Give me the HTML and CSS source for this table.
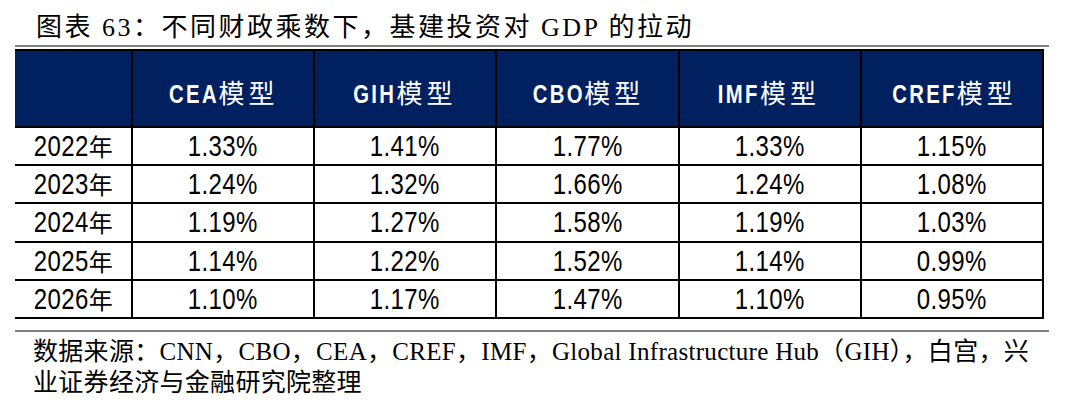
FILE: index.html
```html
<!DOCTYPE html>
<html lang="zh-CN">
<head>
<meta charset="utf-8">
<title>图表 63</title>
<link rel="stylesheet" href="styles.css">
</head>
<body>
<div class="figure">
  <div class="title">图表 63：不同财政乘数下，基建投资对 GDP 的拉动</div>
  <table class="data">
    <colgroup>
      <col class="c-year">
      <col class="c-val"><col class="c-val"><col class="c-val"><col class="c-val"><col class="c-val">
    </colgroup>
    <thead>
      <tr>
        <th></th>
        <th><span class="code">CEA</span><span class="cn">模型</span></th>
        <th><span class="code">GIH</span><span class="cn">模型</span></th>
        <th><span class="code">CBO</span><span class="cn">模型</span></th>
        <th><span class="code">IMF</span><span class="cn">模型</span></th>
        <th><span class="code">CREF</span><span class="cn">模型</span></th>
      </tr>
    </thead>
    <tbody>
      <tr><td><span class="yr">2022</span>年</td><td><span class="num">1.33%</span></td><td><span class="num">1.41%</span></td><td><span class="num">1.77%</span></td><td><span class="num">1.33%</span></td><td><span class="num">1.15%</span></td></tr>
      <tr><td><span class="yr">2023</span>年</td><td><span class="num">1.24%</span></td><td><span class="num">1.32%</span></td><td><span class="num">1.66%</span></td><td><span class="num">1.24%</span></td><td><span class="num">1.08%</span></td></tr>
      <tr><td><span class="yr">2024</span>年</td><td><span class="num">1.19%</span></td><td><span class="num">1.27%</span></td><td><span class="num">1.58%</span></td><td><span class="num">1.19%</span></td><td><span class="num">1.03%</span></td></tr>
      <tr><td><span class="yr">2025</span>年</td><td><span class="num">1.14%</span></td><td><span class="num">1.22%</span></td><td><span class="num">1.52%</span></td><td><span class="num">1.14%</span></td><td><span class="num">0.99%</span></td></tr>
      <tr><td><span class="yr">2026</span>年</td><td><span class="num">1.10%</span></td><td><span class="num">1.17%</span></td><td><span class="num">1.47%</span></td><td><span class="num">1.10%</span></td><td><span class="num">0.95%</span></td></tr>
    </tbody>
  </table>
  <div class="source">数据来源：CNN，CBO，CEA，CREF，IMF，Global Infrastructure Hub（GIH），白宫，兴<br>业证券经济与金融研究院整理</div>
</div>
</body>
</html>
```
FILE: styles.css
```css
html, body {
  margin: 0;
  padding: 0;
  background: #ffffff;
}

.figure {
  width: 1080px;
  height: 412px;
  padding: 0 31px 0 15px;
  box-sizing: border-box;
  display: flex;
  flex-direction: column;
}

.title {
  font-family: "Liberation Serif", "Noto Sans CJK SC", serif;
  font-size: 26px;
  letter-spacing: 2.5px;
  line-height: 30px;
  color: #000;
  padding: 13px 0 2px 21px;
  border-bottom: 2px solid #808080;
  white-space: nowrap;
}

.data {
  margin-top: 2px;
  width: 1028px;
  border-collapse: collapse;
  table-layout: fixed;
  font-family: "Liberation Sans", "Noto Sans CJK SC", sans-serif;
  color: #000;
}

.c-year { width: 117px; }
.c-val { width: 182.2px; }

.data th {
  background: #002060;
  color: #ffffff;
  height: 77px;
  padding: 6px 0 0 0;
  box-sizing: border-box;
  text-align: center;
  vertical-align: middle;
  border: 2px solid #000;
  white-space: nowrap;
}

.data th:first-child {
  border-left: none;
}

.data th .code {
  display: inline-block;
  font-family: "Liberation Sans", sans-serif;
  font-size: 26px;
  font-weight: 700;
  letter-spacing: 3px;
  transform: scaleX(0.78);
  transform-origin: right center;
  margin-left: -0.5em;
}

.data th .cn {
  font-family: "Noto Sans CJK SC", sans-serif;
  font-weight: 400;
  font-size: 26px;
  letter-spacing: 4px;
}

.data td {
  height: 38.2px;
  padding: 0;
  box-sizing: border-box;
  font-family: "Noto Sans CJK SC", sans-serif;
  font-size: 24px;
  line-height: 34px;
  text-align: center;
  vertical-align: middle;
  border: 2px solid #000;
  white-space: nowrap;
}

.data td:first-child {
  border-left: none;
}

.data .num,
.data .yr {
  display: inline-block;
  font-family: "Liberation Sans", sans-serif;
  font-size: 30px;
  letter-spacing: 0.5px;
  transform: scaleX(0.8);
}

.data .yr {
  transform-origin: right center;
  margin-left: -0.45em;
}

.source {
  margin-top: 11px;
  border-top: 2px solid #808080;
  padding: 4px 0 0 18px;
  font-family: "Liberation Serif", "Noto Sans CJK SC", serif;
  font-size: 25px;
  letter-spacing: 0.3px;
  line-height: 31px;
  color: #000;
  white-space: nowrap;
}
```
